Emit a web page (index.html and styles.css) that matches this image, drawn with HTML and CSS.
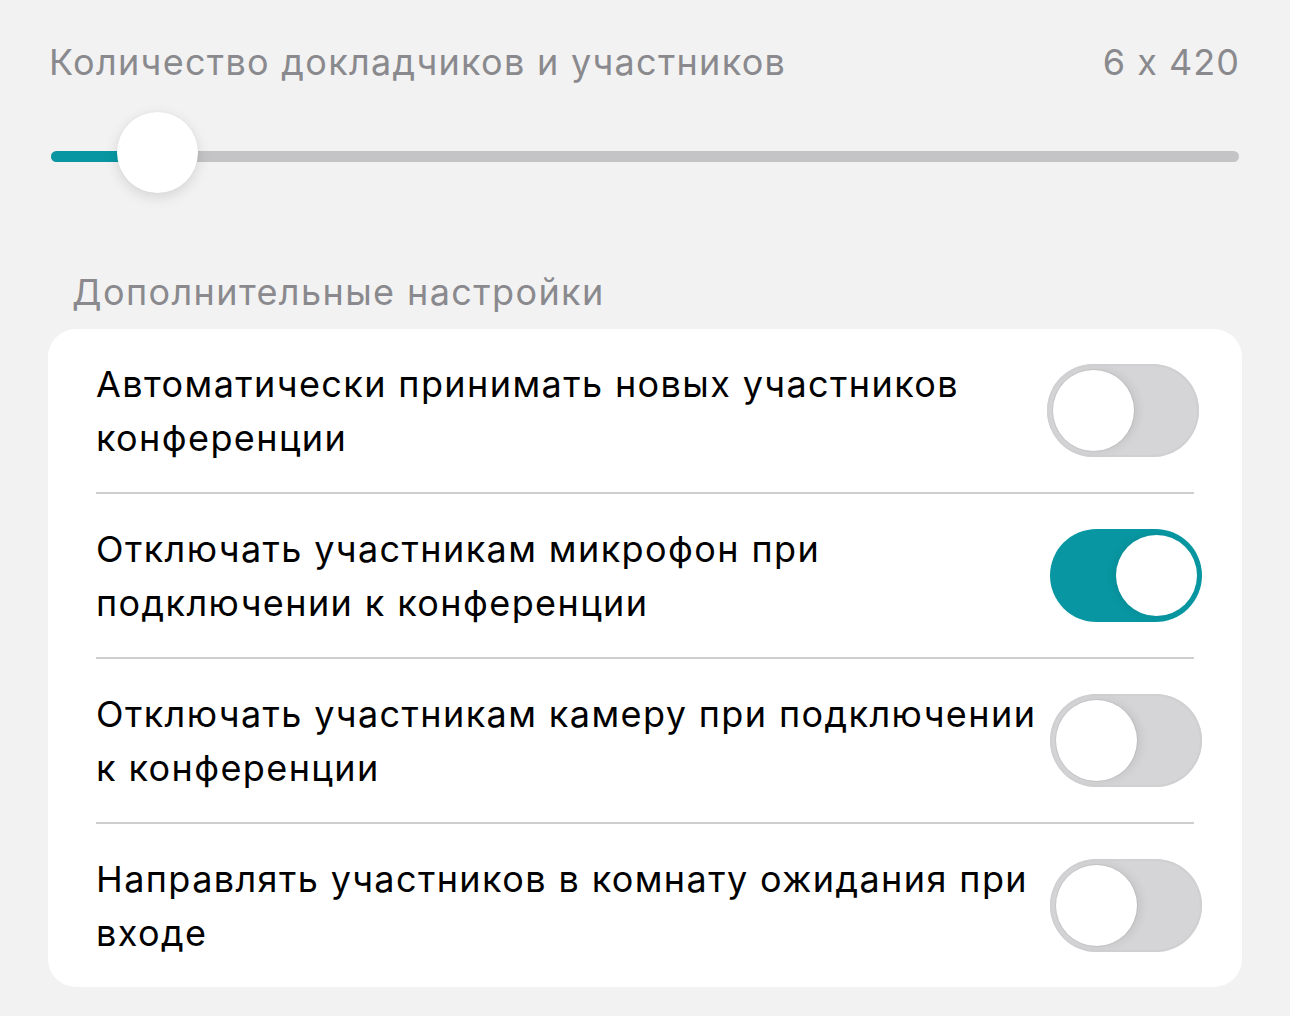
FILE: index.html
```html
<!DOCTYPE html>
<html lang="ru">
<head>
<meta charset="utf-8">
<link rel="stylesheet" href="styles.css">
</head>
<body>
<div class="page">
  <div class="count-row">
    <span class="count-label">Количество докладчиков и участников</span>
    <span class="count-value">6 x 420</span>
  </div>
  <div class="slider">
    <div class="track">
      <div class="fill" style="width: 107px"></div>
    </div>
    <div class="thumb"></div>
  </div>
  <div class="section-title">Дополнительные настройки</div>
  <div class="card">
    <div class="row">
      <div class="row-text">Автоматически принимать новых участников конференции</div>
      <div class="switch switch-off first"><div class="knob"></div></div>
    </div>
    <div class="row">
      <div class="row-text">Отключать участникам микрофон при подключении к конференции</div>
      <div class="switch switch-on"><div class="knob"></div></div>
    </div>
    <div class="row">
      <div class="row-text">Отключать участникам камеру при подключении к конференции</div>
      <div class="switch switch-off"><div class="knob"></div></div>
    </div>
    <div class="row last">
      <div class="row-text">Направлять участников в комнату ожидания при входе</div>
      <div class="switch switch-off"><div class="knob"></div></div>
    </div>
  </div>
</div>
</body>
</html>
```

FILE: styles.css
```css
html, body {
  margin: 0;
  padding: 0;
  background: #f2f2f2;
}
body {
  font-family: Inter, "Noto Sans", sans-serif;
  -webkit-font-smoothing: antialiased;
}
.page {
  width: 1290px;
  height: 1016px;
  box-sizing: border-box;
  padding: 38px 50px 0 48px;
}
.count-row {
  display: flex;
  justify-content: space-between;
  align-items: center;
  height: 48px;
  padding-left: 1px;
  color: #8a8a8e;
  font-size: 36px;
  letter-spacing: 1.3px;
}
.count-value {
  letter-spacing: 1px;
}
.slider {
  position: relative;
  height: 82px;
  margin-top: 26px;
  margin-left: 3px;
  margin-right: 1px;
  display: flex;
  align-items: center;
}
.track {
  flex: 1;
  height: 11px;
  margin-top: 6px;
  border-radius: 6px;
  background: #c4c4c6;
  overflow: hidden;
}
.fill {
  height: 100%;
  background: #0897a2;
}
.thumb {
  position: absolute;
  left: 66px;
  top: 0;
  width: 81px;
  height: 81px;
  border-radius: 50%;
  background: #fff;
  box-shadow: 0 4px 14px rgba(0, 0, 0, 0.12), 0 0 2px rgba(0, 0, 0, 0.06);
}
.section-title {
  margin-top: 74px;
  padding-left: 24px;
  color: #8a8a8e;
  font-size: 36px;
  letter-spacing: 1.4px;
  line-height: 48px;
}
.card {
  margin-top: 13px;
  background: #fff;
  border-radius: 28px;
  padding-left: 48px;
  width: 1194px;
  box-sizing: border-box;
}
.row {
  display: flex;
  align-items: center;
  justify-content: space-between;
  height: 163px;
  border-bottom: 2px solid #cfcfd1;
  margin-right: 48px;
}
.row.last {
  border-bottom: none;
}
.row-text {
  color: #000;
  font-size: 36px;
  line-height: 54px;
  letter-spacing: 1.4px;
  max-width: 952px;
}
.switch {
  position: relative;
  flex: none;
  width: 152px;
  height: 93px;
  border-radius: 47px;
  margin-right: -8px;
  box-sizing: border-box;
}
.switch.first {
  margin-right: -5px;
}
.switch-off {
  background: #d5d5d7;
  box-shadow: inset 0 0 0 2px #d0d0d2;
}
.switch-on {
  background: #0897a2;
}
.knob {
  position: absolute;
  top: 6px;
  width: 81px;
  height: 81px;
  border-radius: 50%;
  background: #fff;
}
.switch-off .knob {
  left: 6px;
  box-shadow: 0 0 0 1px rgba(0, 0, 0, 0.06), 4px 0 10px rgba(0, 0, 0, 0.08);
}
.switch-on .knob {
  right: 5px;
  top: 6px;
  box-shadow: -3px 0 8px rgba(0, 0, 0, 0.08);
}
```
